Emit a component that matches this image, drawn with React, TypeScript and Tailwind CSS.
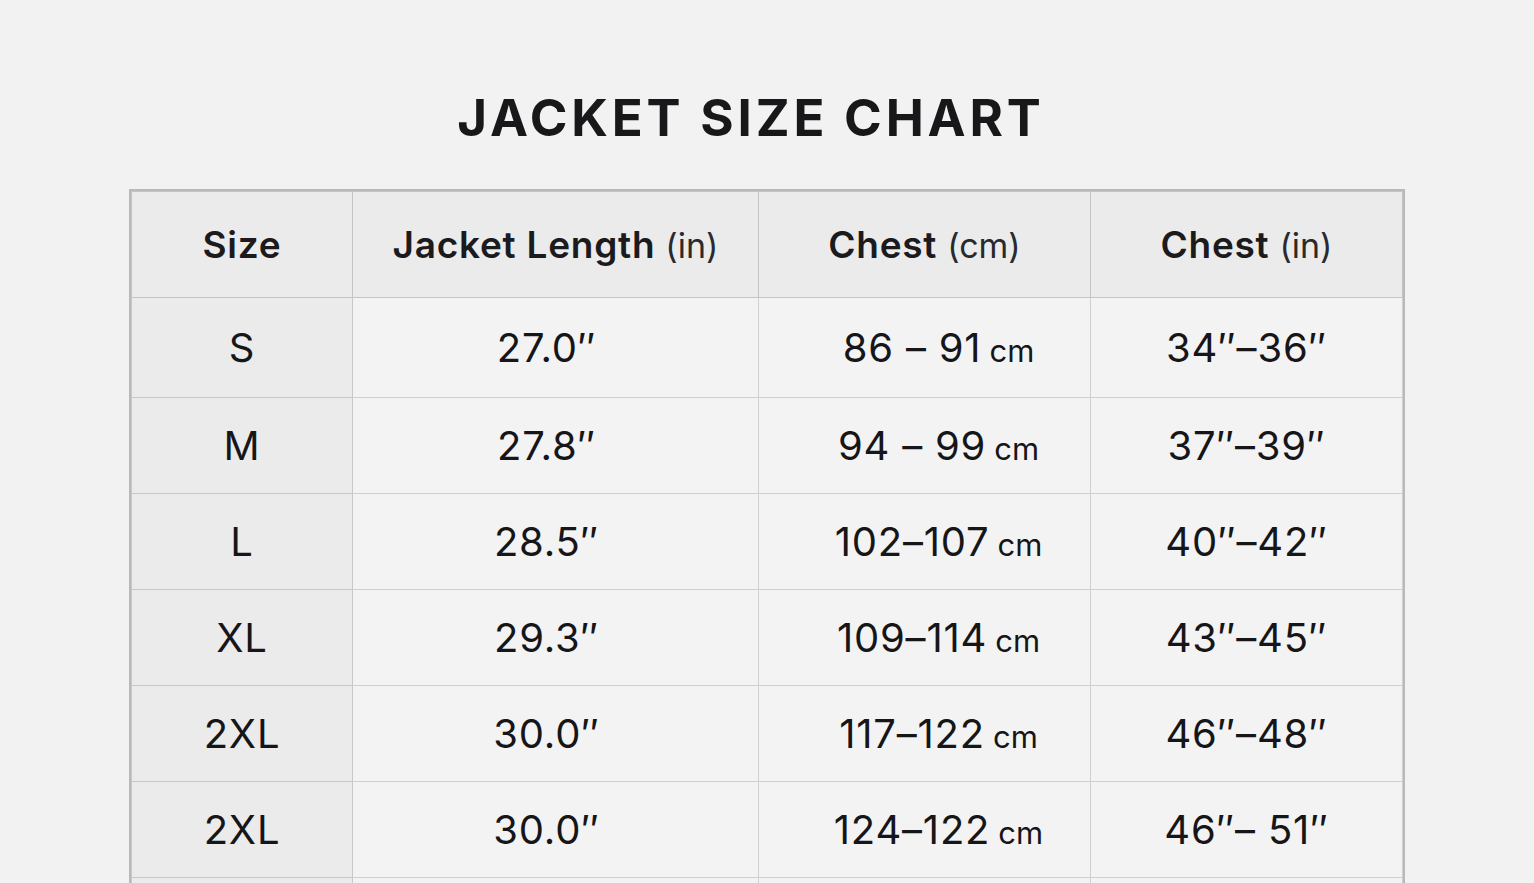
import React from "react";

type Row = {
  size: string;
  length: string;
  cm: string;
  inch: string;
};

const ROWS: Row[] = [
  { size: "S", length: "27.0″", cm: "86 – 91", inch: "34″–36″" },
  { size: "M", length: "27.8″", cm: "94 – 99", inch: "37″–39″" },
  { size: "L", length: "28.5″", cm: "102–107", inch: "40″–42″" },
  { size: "XL", length: "29.3″", cm: "109–114", inch: "43″–45″" },
  { size: "2XL", length: "30.0″", cm: "117–122", inch: "46″–48″" },
  { size: "2XL", length: "30.0″", cm: "124–122", inch: "46″– 51″" },
];

function HeadCell({ label, unit }: { label: string; unit?: string }) {
  return (
    <th className="h-[106px] border border-[#c4c4c6] bg-[#ebebec] text-center align-middle text-[37px] font-semibold tracking-[0.02em] text-[#1b1b1d]">
      {label}
      {unit && (
        <span className="ml-[10px] text-[34px] font-normal tracking-normal text-[#2a2a2c]">
          {unit}
        </span>
      )}
    </th>
  );
}

export default function App() {
  return (
    <div
      className="min-h-screen bg-[#f3f2f3] pt-[92px]"
      style={{ fontFamily: "Inter, 'Noto Sans', sans-serif" }}
    >
      {/* Title */}
      <h1 className="pr-[32px] text-center text-[51px] font-bold leading-none tracking-[0.075em] text-[#18181a]">
        JACKET SIZE CHART
      </h1>

      {/* Table */}
      <div className="mx-auto mt-[46px] w-[1276px] border-2 border-[#b9b9bb]">
        <table className="w-full table-fixed border-collapse">
          <colgroup>
            <col className="w-[221px]" />
            <col className="w-[406px]" />
            <col className="w-[332px]" />
            <col />
          </colgroup>
          <thead>
            <tr>
              <HeadCell label="Size" />
              <HeadCell label="Jacket Length" unit="(in)" />
              <HeadCell label="Chest" unit="(cm)" />
              <HeadCell label="Chest" unit="(in)" />
            </tr>
          </thead>
          <tbody>
            {ROWS.map((row, i) => (
              <tr
                key={i}
                className={`${i === 0 ? "h-[100px]" : "h-[96px]"} text-[40px] font-normal tracking-[0.02em] text-[#161618]`}
              >
                <td className="border border-[#c8c8ca] bg-[#ebebec] text-center align-middle">
                  {row.size}
                </td>
                <td className="border border-[#cfcfd1] bg-[#f3f3f4] pr-[18px] text-center align-middle">
                  {row.length}
                </td>
                <td className="border border-[#cfcfd1] bg-[#f3f3f4] pl-[28px] text-center align-middle">
                  {row.cm}
                  <span className="ml-[8px] text-[31px] tracking-normal">cm</span>
                </td>
                <td className="border border-[#cfcfd1] bg-[#f3f3f4] text-center align-middle">
                  {row.inch}
                </td>
              </tr>
            ))}
            {/* next row, only its top shows */}
            <tr className="h-[96px]">
              <td className="border border-[#c8c8ca] bg-[#ebebec]" />
              <td className="border border-[#cfcfd1] bg-[#f3f3f4]" />
              <td className="border border-[#cfcfd1] bg-[#f3f3f4]" />
              <td className="border border-[#cfcfd1] bg-[#f3f3f4]" />
            </tr>
          </tbody>
        </table>
      </div>
    </div>
  );
}
